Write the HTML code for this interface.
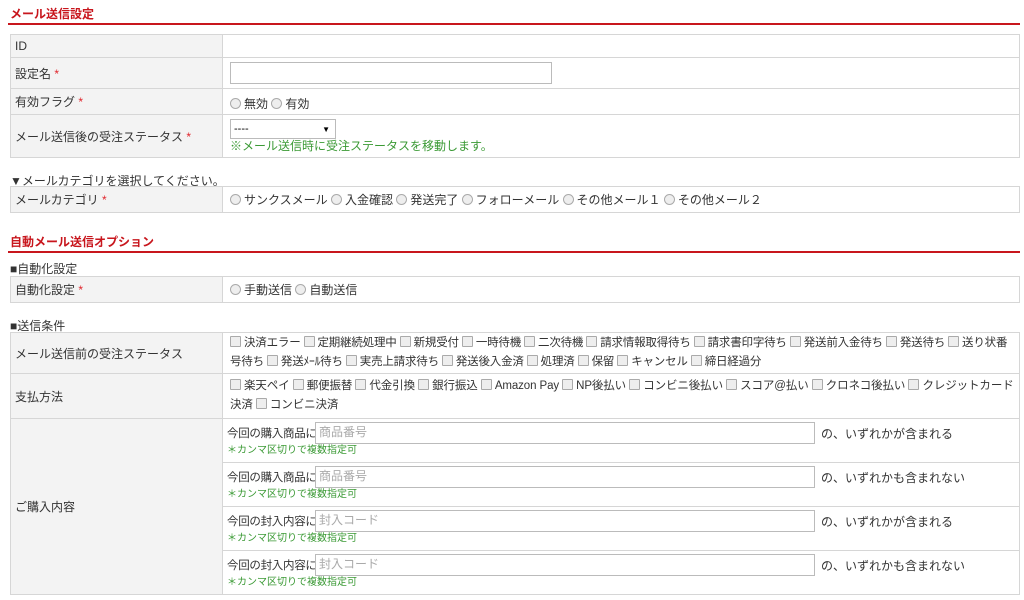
<!DOCTYPE html>
<html><head><meta charset="utf-8"><style>
body{margin:0;background:#fff;font-family:"Liberation Sans","Noto Sans CJK JP",sans-serif;font-size:12px;color:#333;width:1024px;height:600px;overflow:hidden;position:relative}
.h{position:absolute;left:10px;color:#c8161d;font-weight:bold;font-size:12px}
.line{position:absolute;left:8px;width:1012px;height:2px;background:#c8161d}
.cap{position:absolute;left:10px;font-size:12px;color:#333}
table{position:absolute;left:10px;width:1010px;border-collapse:collapse;table-layout:fixed}
td{border:1px solid #d6d6d6;padding:0 4px;vertical-align:middle;white-space:nowrap}
td.l{width:203px;background:#f3f3f3;padding-left:4px}
td.r{padding-left:7px}
.req{color:#e0252c}
.rd{display:inline-block;width:9px;height:9px;border:1px solid #aaa;border-radius:50%;background:#eee;vertical-align:-1px;margin-right:3px}
.cb{display:inline-block;width:9px;height:9px;border:1px solid #aaa;border-radius:1px;background:#eee;vertical-align:-1px;margin-right:3px}
.inp{display:inline-block;border:1px solid #bbb;height:20px;vertical-align:middle;box-sizing:border-box}
.g{color:#3b9a35}
.ph{color:#aaa;font-size:12px;padding-left:3px;line-height:18px}
.sub{border-bottom:1px solid #d6d6d6;height:43px;position:relative}
.sub:last-child{border-bottom:none}
.lb{position:absolute;left:4px;top:6px;font-size:11.5px;letter-spacing:-0.3px}
.in{position:absolute;left:92px;top:3px;width:500px;height:22px}
.tx{position:absolute;left:598px;top:6px}
.nt{position:absolute;left:4px;top:22px;font-size:10px}
</style></head><body>
<div class="h" style="top:5px">メール送信設定</div>
<div class="line" style="top:23px"></div>
<table style="top:34px">
<tr style="height:23px"><td class="l">ID</td><td class="r"></td></tr>
<tr style="height:31px"><td class="l">設定名 <span class="req">*</span></td><td class="r"><span class="inp" style="width:322px;height:22px"></span></td></tr>
<tr style="height:26px"><td class="l">有効フラグ <span class="req">*</span></td><td class="r" style="padding-top:3px"><span class="rd"></span>無効 <span class="rd"></span>有効</td></tr>
<tr style="height:43px"><td class="l">メール送信後の受注ステータス <span class="req">*</span></td><td class="r" style="line-height:14px"><span class="inp" style="width:106px;height:20px;position:relative;font-size:11px;padding:2px 3px;color:#000">----<span style="position:absolute;right:5px;top:3px;font-size:8px">▼</span></span><br><span class="g">※メール送信時に受注ステータスを移動します。</span></td></tr>
</table>
<div class="cap" style="top:172px">▼メールカテゴリを選択してください。</div>
<table style="top:186px">
<tr style="height:26px"><td class="l">メールカテゴリ <span class="req">*</span></td><td class="r"><span class="rd"></span>サンクスメール <span class="rd"></span>入金確認 <span class="rd"></span>発送完了 <span class="rd"></span>フォローメール <span class="rd"></span>その他メール１ <span class="rd"></span>その他メール２</td></tr>
</table>
<div class="h" style="top:233px">自動メール送信オプション</div>
<div class="line" style="top:251px"></div>
<div class="cap" style="top:260px">■自動化設定</div>
<table style="top:276px">
<tr style="height:26px"><td class="l">自動化設定 <span class="req">*</span></td><td class="r"><span class="rd"></span>手動送信 <span class="rd"></span>自動送信</td></tr>
</table>
<div class="cap" style="top:317px">■送信条件</div>
<table style="top:332px">
<tr style="height:41px"><td class="l">メール送信前の受注ステータス</td><td class="r" style="line-height:19px;font-size:11.5px;letter-spacing:-0.2px"><span class="cb"></span>決済エラー <span class="cb"></span>定期継続処理中 <span class="cb"></span>新規受付 <span class="cb"></span>一時待機 <span class="cb"></span>二次待機 <span class="cb"></span>請求情報取得待ち <span class="cb"></span>請求書印字待ち <span class="cb"></span>発送前入金待ち <span class="cb"></span>発送待ち <span class="cb"></span>送り状番<br>号待ち <span class="cb"></span>発送ﾒｰﾙ待ち <span class="cb"></span>実売上請求待ち <span class="cb"></span>発送後入金済 <span class="cb"></span>処理済 <span class="cb"></span>保留 <span class="cb"></span>キャンセル <span class="cb"></span>締日経過分</td></tr>
<tr style="height:45px"><td class="l">支払方法</td><td class="r" style="line-height:19px;font-size:11.5px;letter-spacing:-0.1px"><span class="cb"></span>楽天ペイ <span class="cb"></span>郵便振替 <span class="cb"></span>代金引換 <span class="cb"></span>銀行振込 <span class="cb"></span>Amazon Pay <span class="cb"></span>NP後払い <span class="cb"></span>コンビニ後払い <span class="cb"></span>スコア@払い <span class="cb"></span>クロネコ後払い <span class="cb"></span>クレジットカード<br>決済 <span class="cb"></span>コンビニ決済</td></tr>
<tr style="height:174px"><td class="l">ご購入内容</td><td style="padding:0">
<div class="sub"><span class="lb">今回の購入商品に</span><span class="inp ph in">商品番号</span><span class="tx">の、いずれかが含まれる</span><span class="g nt">＊カンマ区切りで複数指定可</span></div>
<div class="sub"><span class="lb">今回の購入商品に</span><span class="inp ph in">商品番号</span><span class="tx">の、いずれかも含まれない</span><span class="g nt">＊カンマ区切りで複数指定可</span></div>
<div class="sub"><span class="lb">今回の封入内容に</span><span class="inp ph in">封入コード</span><span class="tx">の、いずれかが含まれる</span><span class="g nt">＊カンマ区切りで複数指定可</span></div>
<div class="sub"><span class="lb">今回の封入内容に</span><span class="inp ph in">封入コード</span><span class="tx">の、いずれかも含まれない</span><span class="g nt">＊カンマ区切りで複数指定可</span></div>
</td></tr>
</table>
</body></html>
